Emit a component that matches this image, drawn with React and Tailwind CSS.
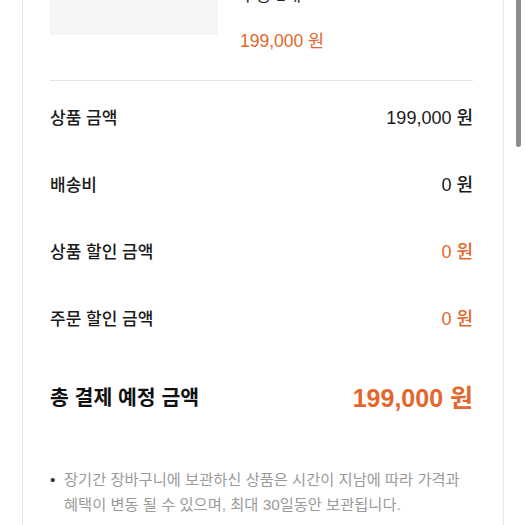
const rows = [
  { label: '상품 금액', value: '199,000 원', accent: false },
  { label: '배송비', value: '0 원', accent: false },
  { label: '상품 할인 금액', value: '0 원', accent: true },
  { label: '주문 할인 금액', value: '0 원', accent: true },
]

const font = { fontFamily: '"Liberation Sans", "Noto Sans CJK KR", sans-serif' }

export default function App() {
  return (
    <div className="relative h-[525px] overflow-hidden bg-white" style={font}>
      <div className="-mt-[85px] ml-[22px] w-[482px] h-[640px] border-x border-[#e6e6e6] pl-[27px] pr-[30px]">
        {/* product item, scrolled partly out of view */}
        <div className="flex gap-[22px]">
          <div className="w-[168px] h-[120px] shrink-0 bg-[#f6f6f7]" />
          <div className="pt-[45px] text-[17px] leading-[24px] text-[#222]">
            <p>니트 라운드 가디건</p>
            <p>수량 1개</p>
            <p className="mt-[21px] text-[17.5px] text-[#e5662c]">199,000 원</p>
          </div>
        </div>

        <div className="mt-[27px] h-px bg-[#e4e4e4]" />

        <div className="pt-[4px]">
          {rows.map((r) => (
            <div key={r.label} className="flex h-[67px] items-center justify-between">
              <span className="text-[17px] font-medium text-[#1a1a1a]">{r.label}</span>
              <span className={r.accent ? 'text-[18px] font-medium text-[#e5662c]' : 'text-[18px] font-medium text-[#1a1a1a]'}>
                {r.value}
              </span>
            </div>
          ))}
        </div>

        <div className="mt-[12px] flex h-[67px] items-center justify-between">
          <span className="text-[20.5px] font-bold text-[#111]">총 결제 예정 금액</span>
          <span className="text-[25px] font-bold text-[#e5662c]">199,000 원</span>
        </div>

        <ul className="mt-[35px] text-[15.3px] leading-[25px] text-[#9a9a9a]">
          <li className="flex">
            <span className="w-[14px] shrink-0 text-[#333]">•</span>
            <span>
              장기간 장바구니에 보관하신 상품은 시간이 지남에 따라 가격과
              <br />
              혜택이 변동 될 수 있으며, 최대 30일동안 보관됩니다.
            </span>
          </li>
        </ul>
      </div>

      <div className="absolute right-[4px] top-[-10px] h-[157px] w-[5px] rounded-full bg-[#8c8c8c]" />
    </div>
  )
}
